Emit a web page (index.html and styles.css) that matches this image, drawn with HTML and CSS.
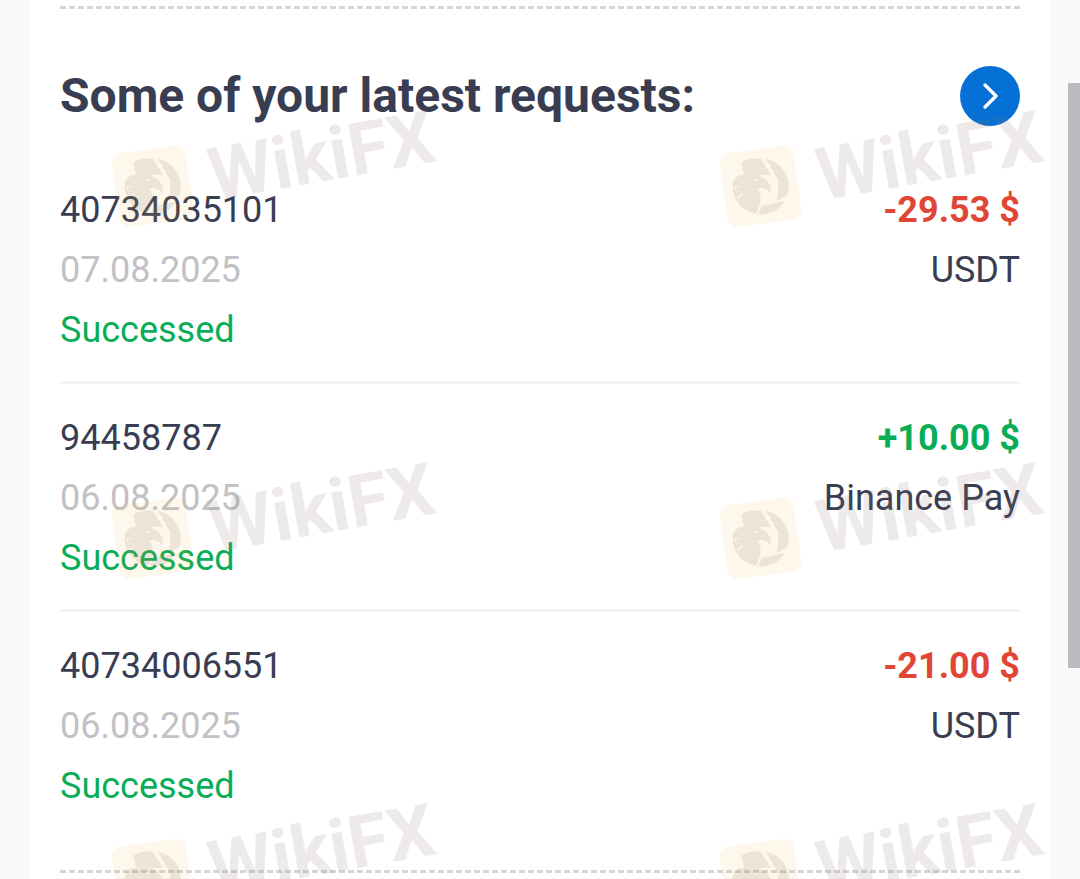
FILE: index.html
```html
<!DOCTYPE html>
<html lang="en">
<head>
  <meta charset="utf-8">
  <title>Requests</title>
  <link rel="stylesheet" href="styles.css">
</head>
<body>
<svg class="svg-defs" width="0" height="0" aria-hidden="true">
  <symbol id="wikifx-logo" viewBox="0 0 72 72">
    <rect width="72" height="72" rx="10" fill="#e9b526" fill-opacity=".09"/>
    <g transform="rotate(7.5 36 36)" fill="#8c7a70" fill-opacity=".16">
      <path d="M17.7 13A27 27 0 0 1 36 9.5L46 25L20 24.8Z"/>
      <path fill-rule="evenodd" d="M9.3 33C10 30 12 27 16 25.3L29.3 25C34 25 36 25.5 37.7 27.3C41 29 44 32 45.7 36.3C46 39 45.5 41 44.3 43C44 41 43 39.5 41 38.7C38 37.5 35 37.5 32.7 38C35 41 36.5 44 36 48C35.5 53 34 57 31.7 62.3A27 27 0 0 1 9.3 33ZM29 29L35 30.5L30 31ZM10 37L18 34.5L11 38.5ZM13 47L20 41.5L14.5 48.5Z"/>
      <path d="M41 9.5A27 27 0 0 1 62 44L52 50L53 30Z"/>
      <path d="M59 50A27 27 0 0 1 33.5 63L37 55Z"/>
    </g>
  </symbol>
</svg>

<main class="card">
  <div class="dashed"></div>

  <header class="card-head">
    <h2>Some of your latest requests:</h2>
    <a class="more" href="#">
      <svg width="60" height="60" viewBox="0 0 60 60"><path d="M25 19l11 11-11 11" fill="none" stroke="#fff" stroke-width="3.4" stroke-linecap="round" stroke-linejoin="round"/></svg>
    </a>
  </header>

  <section class="request">
    <div class="side">
      <div>40734035101</div>
      <div class="date">07.08.2025</div>
      <div class="status">Successed</div>
    </div>
    <div class="side right">
      <div class="amount minus">-29.53 $</div>
      <div>USDT</div>
    </div>
  </section>

  <section class="request">
    <div class="side">
      <div>94458787</div>
      <div class="date">06.08.2025</div>
      <div class="status">Successed</div>
    </div>
    <div class="side right">
      <div class="amount plus">+10.00 $</div>
      <div>Binance Pay</div>
    </div>
  </section>

  <section class="request">
    <div class="side">
      <div>40734006551</div>
      <div class="date">06.08.2025</div>
      <div class="status">Successed</div>
    </div>
    <div class="side right">
      <div class="amount minus">-21.00 $</div>
      <div>USDT</div>
    </div>
  </section>

  <div class="dashed bottom"></div>
</main>

<div class="scroll-thumb"></div>

<div class="watermarks">
  <div class="mark"><svg class="mark-logo"><use href="#wikifx-logo"/></svg><span>WikiFX</span></div>
  <div class="mark"><svg class="mark-logo"><use href="#wikifx-logo"/></svg><span>WikiFX</span></div>
  <div class="mark"><svg class="mark-logo"><use href="#wikifx-logo"/></svg><span>WikiFX</span></div>
  <div class="mark"><svg class="mark-logo"><use href="#wikifx-logo"/></svg><span>WikiFX</span></div>
  <div class="mark"><svg class="mark-logo"><use href="#wikifx-logo"/></svg><span>WikiFX</span></div>
  <div class="mark"><svg class="mark-logo"><use href="#wikifx-logo"/></svg><span>WikiFX</span></div>
</div>
</body>
</html>
```

FILE: styles.css
```css
html, body {
    height: 100%;
}

body {
    margin: 0;
    position: relative;
    overflow: hidden;
    background-color: #fafafa;
    color: #383d52;
    font-family: Roboto, "Liberation Sans", sans-serif;
    font-size: 36px;
    line-height: 60px;
}

.svg-defs {
    display: block;
}

.card {
    margin: 0 30px;
    padding: 6px 30px 0;
    height: 873px;
    background-color: #fff;
}

.dashed {
    border-top: 3px dashed #d5d5d8;
}

.dashed.bottom {
    margin-top: 33px;
}

.card-head {
    display: flex;
    justify-content: space-between;
    align-items: center;
    margin-top: 57px;
    margin-bottom: 54px;
}

.card-head h2 {
    margin: 0;
    font-size: 48px;
    font-weight: 700;
    line-height: 60px;
}

.more {
    display: block;
    width: 60px;
    height: 60px;
    border-radius: 50%;
    background-color: #0570d6;
}

.more svg {
    display: block;
}

.request {
    display: flex;
    justify-content: space-between;
    padding-bottom: 21px;
    margin-bottom: 24px;
    border-bottom: 3px solid #f2f2f3;
}

.request:last-of-type {
    border-bottom: none;
}

.side.right {
    text-align: right;
}

.date {
    color: #c1c1c6;
}

.status {
    color: #0aad57;
}

.amount {
    font-weight: 700;
}

.amount.minus {
    color: #e04535;
}

.amount.plus {
    color: #0aad57;
}

.scroll-thumb {
    position: absolute;
    top: 83px;
    right: 0;
    width: 12px;
    height: 585px;
    background-color: #bbbcc1;
}

.watermarks {
    position: absolute;
    top: 0;
    left: 0;
    right: 0;
    bottom: 0;
    overflow: hidden;
    pointer-events: none;
    display: grid;
    grid-template-columns: 608px 608px;
    grid-template-rows: 352px 341px 100px;
    padding: 155px 0 0 109px;
}

.mark {
    display: flex;
    align-items: center;
    gap: 20px;
    height: 76px;
    transform: rotate(-10deg);
    transform-origin: 0 0;
}

.mark-logo {
    width: 75px;
    height: 75px;
    flex: none;
    transform: rotate(2.5deg);
}

.mark span {
    color: #8c7a70;
    opacity: .15;
    font-size: 73px;
    font-weight: 700;
    line-height: 76px;
}
```
